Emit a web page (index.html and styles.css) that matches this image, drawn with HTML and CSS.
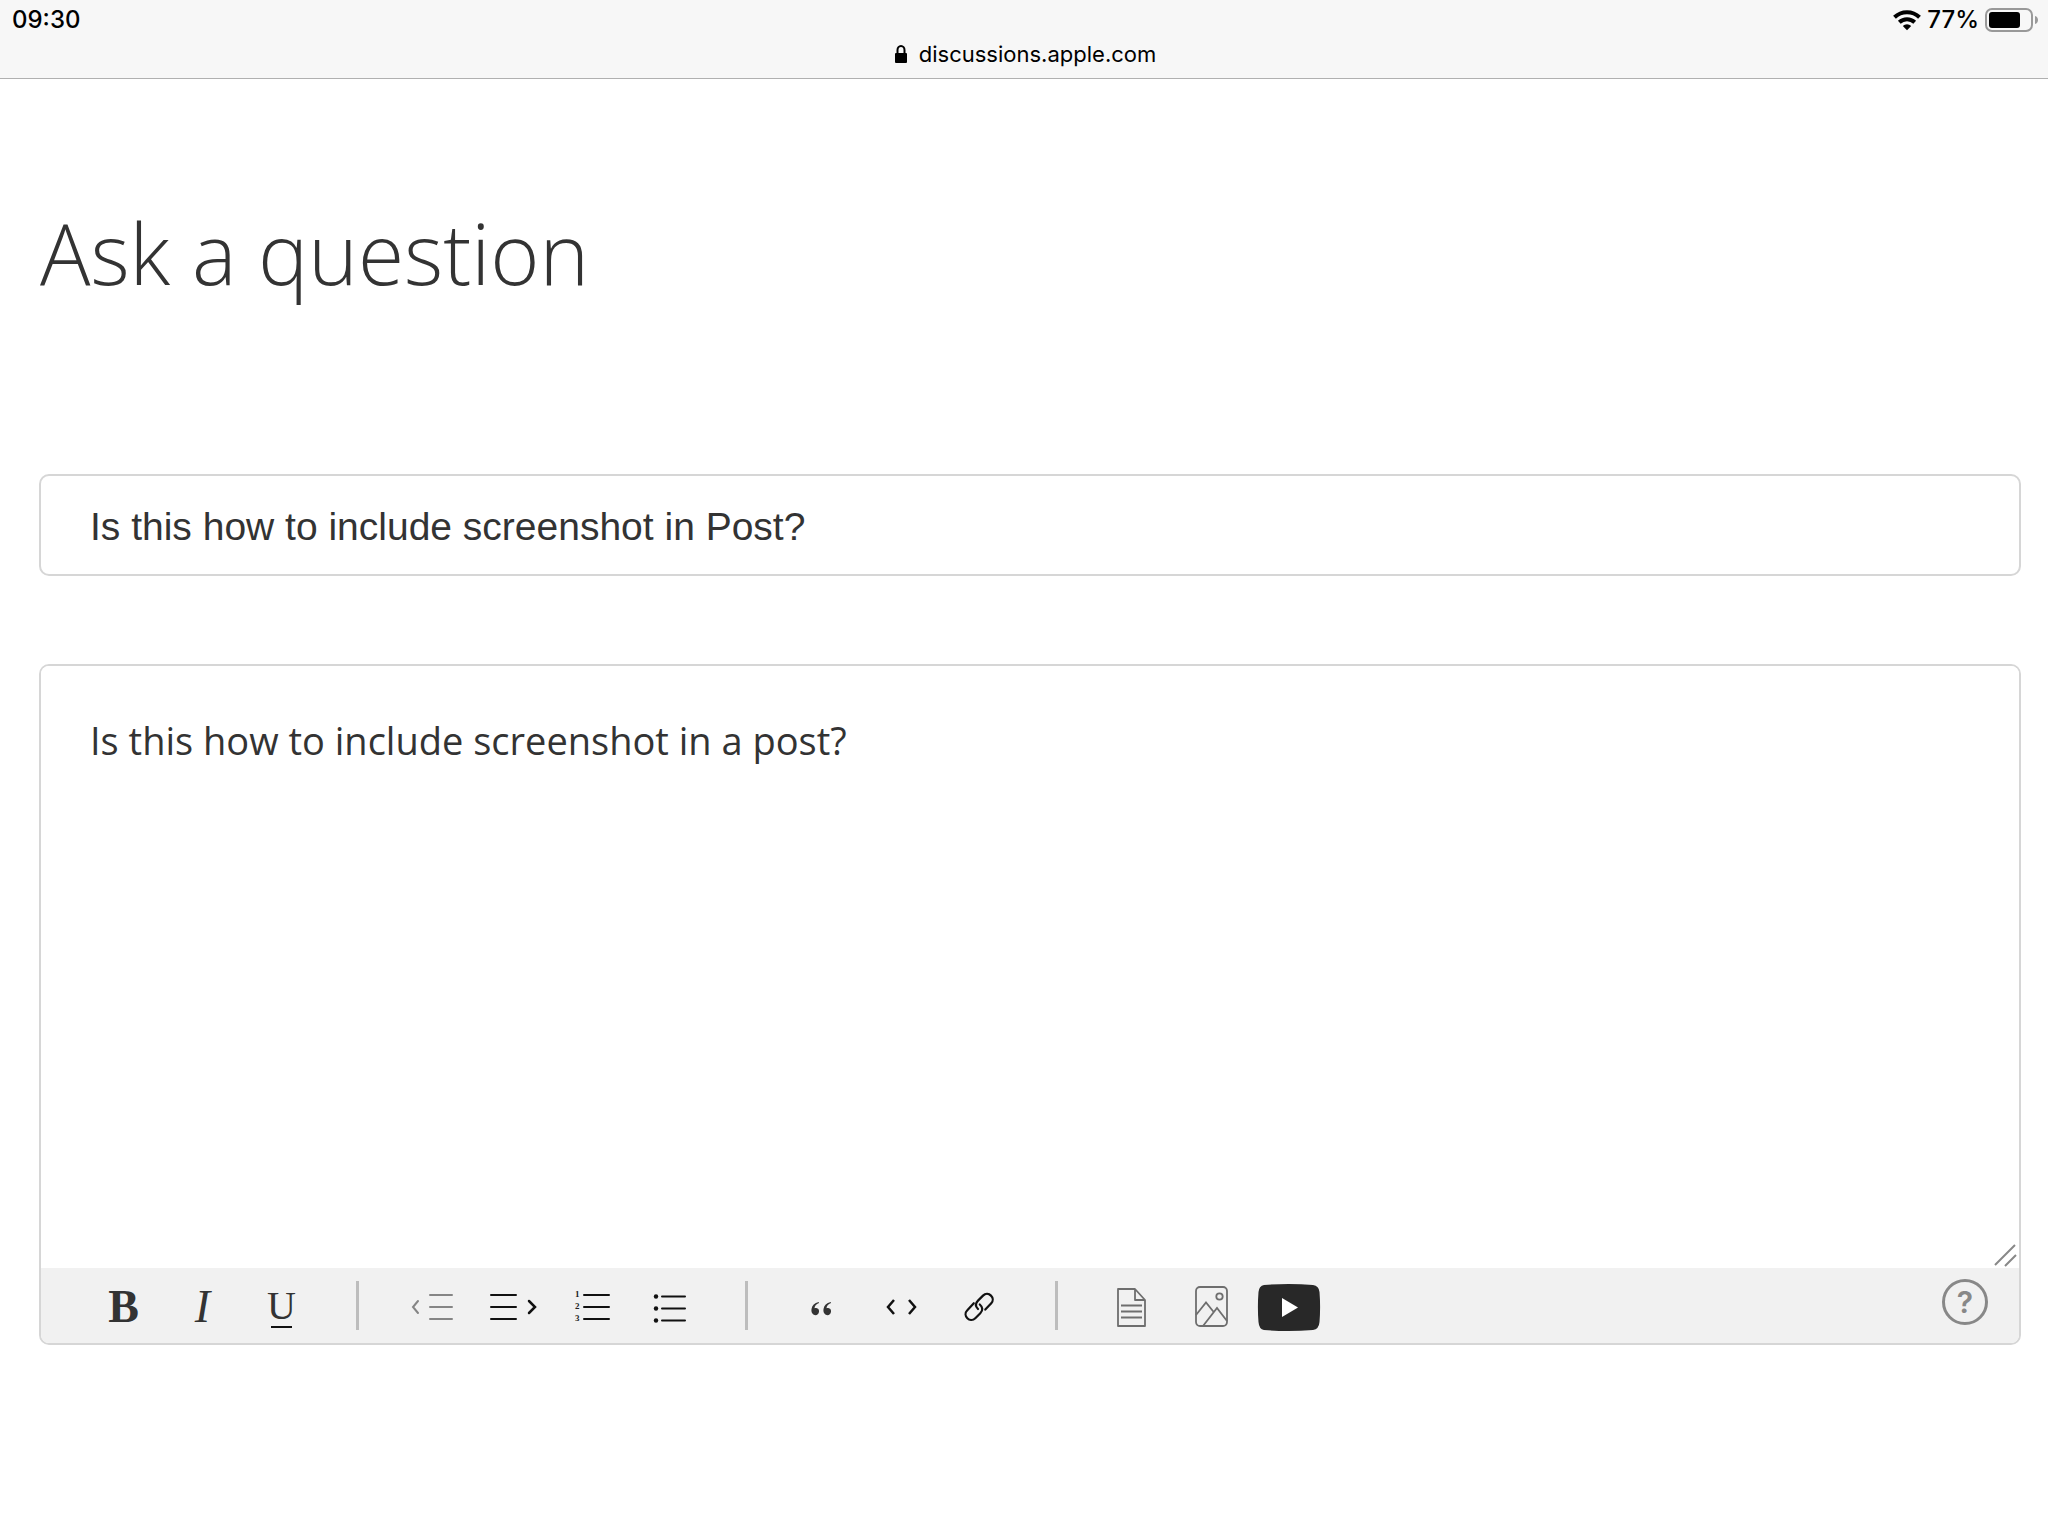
FILE: index.html
```html
<!DOCTYPE html>
<html lang="en">
<head>
<meta charset="utf-8">
<meta name="viewport" content="width=device-width, initial-scale=1">
<title>Ask a question</title>
<link rel="stylesheet" href="styles.css">
</head>
<body>
<header class="browser-bar">
  <div class="status">
    <time class="clock">09:30</time>
    <div class="power">
      <svg class="wifi" viewBox="0 0 28 22" aria-hidden="true">
        <g fill="none" stroke="#000" stroke-width="4">
          <path d="M1.5 8.2a18 18 0 0 1 25 0"/>
          <path d="M6.3 13.2a11.2 11.2 0 0 1 15.4 0"/>
        </g>
        <path d="M14 21.2l-4.2-4.3a6 6 0 0 1 8.4 0z"/>
      </svg>
      <span>77%</span>
      <svg class="battery" viewBox="0 0 54 24" aria-hidden="true">
        <rect x="1" y="1" width="46" height="22" rx="6" fill="none" stroke="#999" stroke-width="2"/>
        <rect x="4" y="4" width="31" height="16" rx="3"/>
        <path d="M50 8c4 1 4 7 0 8z" fill="#999"/>
      </svg>
    </div>
  </div>
  <div class="address">
    <svg class="lock" viewBox="0 0 12 19" aria-hidden="true">
      <rect y="8" width="12" height="10" rx="1"/>
      <path d="M2.5 9V5a3.5 4 0 0 1 7 0v4" fill="none" stroke="#000" stroke-width="2"/>
    </svg>
    <span>discussions.apple.com</span>
  </div>
</header>

<main class="page">
  <h1 class="title">Ask a question</h1>
  <form class="form">
    <input class="subject" type="text" aria-label="Question title" value="Is this how to include screenshot in Post?">
    <div class="editor">
      <div class="editor-body">
        <textarea class="message" aria-label="Question details">Is this how to include screenshot in a post?</textarea>
        <svg class="grip" viewBox="0 0 24 24" aria-hidden="true"><path d="M2 22L22 2M12 23L23 12" fill="none" stroke="#888" stroke-width="2"/></svg>
      </div>
      <div class="toolbar" role="toolbar" aria-label="Formatting">
        <div class="group">
          <button type="button" class="tool letter bold" aria-label="Bold">B</button>
          <button type="button" class="tool letter italic" aria-label="Italic">I</button>
          <button type="button" class="tool letter" aria-label="Underline"><span class="underline">U</span></button>
        </div>
        <span class="divider"></span>
        <div class="group">
          <button type="button" class="tool" aria-label="Outdent">
            <svg viewBox="0 0 79 75" fill="none" stroke="#858585" stroke-width="2" stroke-linecap="round"><path d="M36 27h22M36 39h22M36 51h22"/><path d="M24 33l-5 6 5 6"/></svg>
          </button>
          <button type="button" class="tool" aria-label="Indent">
            <svg viewBox="0 0 79 75" fill="none" stroke="#111" stroke-width="2" stroke-linecap="round"><path d="M18 27h25M18 39h25M18 51h25"/><path d="M56 33l6 6-6 6" stroke-width="2.5"/></svg>
          </button>
          <button type="button" class="tool" aria-label="Numbered list">
            <svg viewBox="0 0 79 75"><g class="digits"><text x="23" y="29">1</text><text x="23" y="41">2</text><text x="23" y="53">3</text></g><path d="M32 27h25M32 39h25M32 51h25" fill="none" stroke="#111" stroke-width="2" stroke-linecap="round"/></svg>
          </button>
          <button type="button" class="tool" aria-label="Bulleted list">
            <svg viewBox="0 0 79 75" fill="#111"><circle cx="25" cy="28.500" r="2.200"/><circle cx="25" cy="40.500" r="2.200"/><circle cx="25" cy="52.500" r="2.200"/><path d="M31 28.500h23M31 40.500h23M31 52.500h23" fill="none" stroke="#111" stroke-width="2" stroke-linecap="round"/></svg>
          </button>
        </div>
        <span class="divider"></span>
        <div class="group">
          <button type="button" class="tool" aria-label="Quote">
            <svg viewBox="0 0 79 75" fill="#333"><path d="M36 35c-3 1-4.500 3-4.500 5.300 1.200-.8 5 0 4.500 3.400-.6 5.500-8.500 4.400-7.500-2.700.5-3.700 3-6.200 7.200-7z"/><path d="M48 35c-3 1-4.500 3-4.500 5.300 1.200-.8 5 0 4.500 3.400-.6 5.500-8.500 4.400-7.500-2.700.5-3.700 3-6.200 7.200-7z"/></svg>
          </button>
          <button type="button" class="tool" aria-label="Code">
            <svg viewBox="0 0 79 75" fill="none" stroke="#111" stroke-width="2.500"><path d="M32 32l-6 7 6 7M47 32l6 7-6 7"/></svg>
          </button>
          <button type="button" class="tool" aria-label="Link">
            <svg viewBox="0 0 79 75" fill="none" stroke="#111" stroke-width="2.200" stroke-linecap="round"><path d="M37 41c-2.700-2.700-2.700-5.700 0-8.400l5-5c5.300-5.300 13.300 2.700 8 8l-5.700 6"/><path d="M38.800 36.500c3.200 2.700 3.200 6 .5 8.700l-5 5c-5.300 5.300-13.300-2.700-8-8l6.500-7"/></svg>
          </button>
        </div>
        <span class="divider"></span>
        <div class="group">
          <button type="button" class="tool" aria-label="Attach document">
            <svg viewBox="0 0 79 75" fill="none" stroke="#6e6e6e" stroke-width="1.800" stroke-linejoin="round"><path d="M25 21h17l10 11v26H25zM42 21v11h10M28 37.500h21M28 43.500h21M28 49.500h21"/></svg>
          </button>
          <button type="button" class="tool" aria-label="Insert image">
            <svg viewBox="0 0 79 75" fill="none" stroke="#6e6e6e" stroke-width="1.800"><rect x="24" y="19" width="31" height="39" rx="4"/><circle cx="47.500" cy="28.500" r="3.200"/><path d="M24 47l10-12.500 7.300 9M31 58l14-18 10 13"/></svg>
          </button>
          <button type="button" class="tool" aria-label="Insert video">
            <svg viewBox="0 0 79 75"><path d="M13 17q25-2 49 0 6 1 6.500 7 1.200 15 0 30-.5 7-6.500 8-25 2-49 0-5-1-5.500-8-1.200-15 0-30 .5-6 5.500-7z" fill="#282828"/><path d="M31 30l16 9.500-16 9.500z" fill="#fff"/></svg>
          </button>
        </div>
        <button type="button" class="help" aria-label="Help">?</button>
      </div>
    </div>
  </form>
</main>
</body>
</html>
```
FILE: styles.css
```css
* {
  box-sizing: border-box;
}

body {
  margin: 0;
  background: #fff;
  color: #333;
  font-family: "Open Sans", sans-serif;
}

.browser-bar {
  padding: 1px 9px 9px 12px;
  border-bottom: 1px solid #b0b0b0;
  background: #f7f7f7;
  color: #000;
  font: 22px/30px Inter, sans-serif;
}

.status {
  display: flex;
  justify-content: space-between;
  font-size: 24px;
  line-height: 38px;
  font-weight: 500;
}

.power {
  display: flex;
  align-items: center;
  gap: 6px;
}

.wifi {
  width: 28px;
  height: 22px;
}

.battery {
  width: 54px;
  height: 24px;
}

.address {
  display: flex;
  align-items: center;
  justify-content: center;
  gap: 12px;
}

.lock {
  width: 12px;
  height: 19px;
}

.page {
  padding: 114px 27px 60px 39px;
}

.title {
  margin: 0;
  padding-left: 1px;
  font-family: "Open Sans", sans-serif;
  font-size: 84px;
  font-weight: 300;
  line-height: 120px;
}

.form {
  display: grid;
  gap: 88px;
  margin-top: 161px;
}

.subject {
  width: 100%;
  height: 102px;
  padding: 4px 49px 0;
  border: 2px solid #d6d6d6;
  border-radius: 10px;
  background: #fff;
  color: #333;
  font: 39px "Liberation Sans", Arial, sans-serif;
}

.editor {
  border: 2px solid #d6d6d6;
  border-radius: 10px;
  overflow: hidden;
}

.editor-body {
  display: grid;
  position: relative;
}

.message {
  width: 100%;
  height: 602px;
  padding: 44px 49px;
  border: 0;
  background: #fff;
  color: #333;
  font: 38px/60px "Open Sans", sans-serif;
  resize: none;
}

.grip {
  position: absolute;
  right: 2px;
  bottom: 1px;
  width: 24px;
  height: 24px;
}

.toolbar {
  display: flex;
  align-items: center;
  gap: 35px;
  height: 75px;
  padding: 0 31px 0 43px;
  background: #f1f1f1;
}

.group {
  display: flex;
}

.tool {
  display: grid;
  place-items: center;
  width: 79px;
  height: 75px;
  padding: 0;
  border: 0;
  background: none;
  color: #333;
}

.tool svg {
  width: 79px;
  height: 75px;
}

.letter {
  padding-top: 1px;
  font: 40px "Liberation Serif", "Times New Roman", serif;
}

.bold {
  font-size: 46px;
  font-weight: 700;
}

.italic {
  font-size: 46px;
  font-style: italic;
}

.underline {
  background: linear-gradient(#111, #111) 4px 100% / 21px 2px no-repeat;
  line-height: 44px;
}

.digits {
  fill: #222;
  font: 700 9px "Liberation Serif", serif;
}

.divider {
  width: 3px;
  height: 49px;
  background: #bdbdbd;
}

.help {
  width: 46px;
  height: 46px;
  margin: 0 0 8px auto;
  padding: 0;
  border: 3px solid #888;
  border-radius: 50%;
  background: none;
  color: #888;
  font: 600 30px/40px Inter, sans-serif;
}
```
